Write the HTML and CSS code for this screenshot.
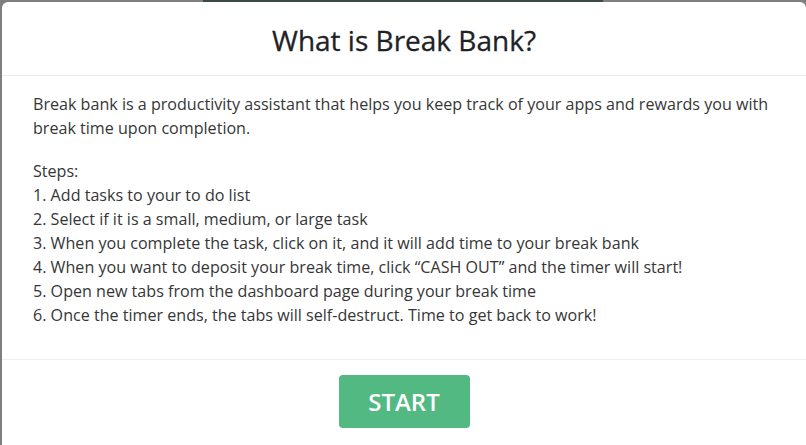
FILE: index.html
```html
<!DOCTYPE html>
<html lang="en">
<head>
    <meta charset="UTF-8">
    <meta name="viewport" content="width=device-width, initial-scale=1.0">
    <title>Break Bank</title>
    <link rel="stylesheet" href="styles.css">
</head>
<body>
    <!-- dashboard peeking out behind the backdrop -->
    <div class="page-behind"><div class="page-strip"></div></div>

    <div class="modal">
        <div class="modal-header">
            <h1 class="modal-title">What is Break Bank?</h1>
        </div>
        <div class="modal-body">
            <p>Break bank is a productivity assistant that helps you keep track of your apps and rewards you with break time upon completion.</p>
            <p>Steps:<br>
            1. Add tasks to your to do list<br>
            2. Select if it is a small, medium, or large task<br>
            3. When you complete the task, click on it, and it will add time to your break bank<br>
            4. When you want to deposit your break time, click “CASH OUT” and the timer will start!<br>
            5. Open new tabs from the dashboard page during your break time<br>
            6. Once the timer ends, the tabs will self-destruct. Time to get back to work!</p>
        </div>
        <div class="modal-footer">
            <button class="start-button">START</button>
        </div>
    </div>
</body>
</html>
```

FILE: styles.css
```css
/* backdrop */
body {
    margin: 0;
    height: 100vh;
    overflow: hidden;
    background-color: #7f7f7f;
    font-family: 'Open Sans', 'Noto Sans', sans-serif;
    position: relative;
}

.page-behind {
    position: absolute;
    top: 0;
    left: 0;
    right: 0;
    display: flex;
    justify-content: center;
}

.page-strip {
    width: 400px;
    height: 2px;
    background-color: #3c4a44;
}

/* modal box */
.modal {
    position: absolute;
    top: 2px;
    left: 2px;
    right: 0;
    bottom: 0;
    background-color: #ffffff;
    border-radius: 6px 6px 0 0;
    display: flex;
    flex-direction: column;
}

.modal-header {
    height: 73px;
    display: flex;
    justify-content: center;
    align-items: center;
    border-bottom: 1px solid #e9ecef;
}

.modal-title {
    margin: 0;
    font-size: 28px;
    font-weight: 500;
    color: #1e2226;
    padding-top: 2px;
    -webkit-text-stroke: 0.3px #1e2226;
}

.modal-body {
    padding: 16px 31px 13px 31px;
    border-bottom: 1px solid #f0f0f0;
}

.modal-body p {
    margin: 0 0 19px 0;
    font-size: 16.1px;
    line-height: 24px;
    color: #363636;
}

.modal-footer {
    display: flex;
    justify-content: center;
    padding-top: 15px;
}

.start-button {
    width: 131px;
    height: 53px;
    background-color: #52b983;
    color: #ffffff;
    border: none;
    border-radius: 4px;
    font-family: 'Open Sans', sans-serif;
    font-size: 24px;
    font-weight: 600;
    cursor: pointer;
}
```
